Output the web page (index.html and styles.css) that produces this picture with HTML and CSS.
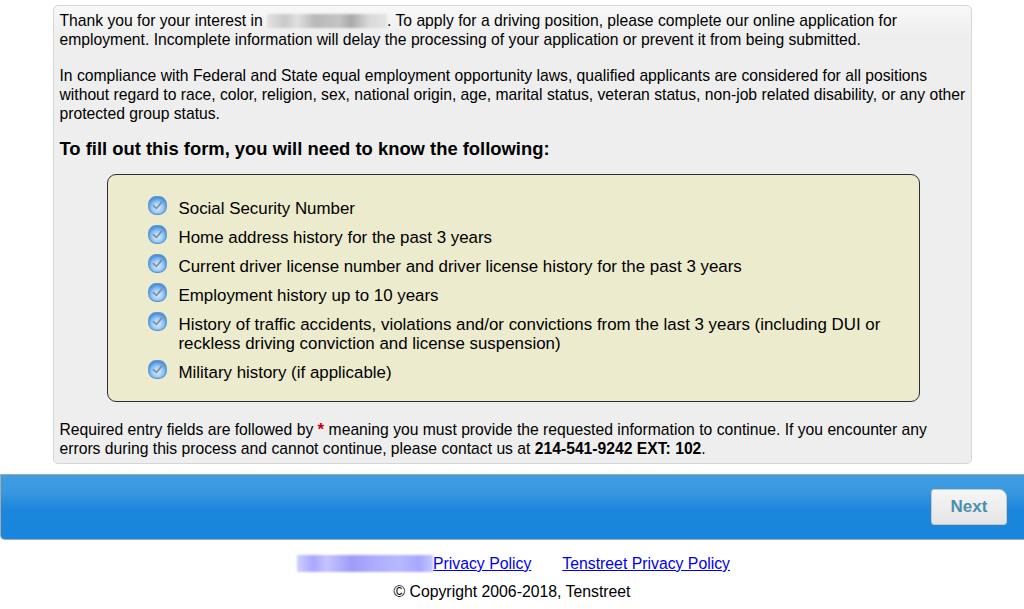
FILE: index.html
```html
<!DOCTYPE html>
<html>
<head>
<meta charset="utf-8">
<link rel="stylesheet" href="styles.css">
</head>
<body>
<div class="panel">
  <p class="para">Thank you for your interest in <span class="blur"></span>. To apply for a driving position, please complete our online application for employment. Incomplete information will delay the processing of your application or prevent it from being submitted.</p>
  <p class="para last">In compliance with Federal and State equal employment opportunity laws, qualified applicants are considered for all positions without regard to race, color, religion, sex, national origin, age, marital status, veteran status, non-job related disability, or any other protected group status.</p>
  <h3 class="heading">To fill out this form, you will need to know the following:</h3>
  <div class="needbox">
    <ul class="list">
      <li class="item"><svg class="chk" viewBox="0 0 18 18"><use href="#cb"/></svg><span>Social Security Number</span></li>
      <li class="item"><svg class="chk" viewBox="0 0 18 18"><use href="#cb"/></svg><span>Home address history for the past 3 years</span></li>
      <li class="item"><svg class="chk" viewBox="0 0 18 18"><use href="#cb"/></svg><span>Current driver license number and driver license history for the past 3 years</span></li>
      <li class="item"><svg class="chk" viewBox="0 0 18 18"><use href="#cb"/></svg><span>Employment history up to 10 years</span></li>
      <li class="item"><svg class="chk" viewBox="0 0 18 18"><use href="#cb"/></svg><span>History of traffic accidents, violations and/or convictions from the last 3 years (including DUI or reckless driving conviction and license suspension)</span></li>
      <li class="item"><svg class="chk" viewBox="0 0 18 18"><use href="#cb"/></svg><span>Military history (if applicable)</span></li>
    </ul>
  </div>
  <p class="para req">Required entry fields are followed by <span class="star">*</span> meaning you must provide the requested information to continue. If you encounter any errors during this process and cannot continue, please contact us at <b>214-541-9242 EXT: 102</b>.</p>
</div>
<div class="bar">
  <button class="next">Next</button>
</div>
<div class="footer">
  <div class="links"><span class="blur2"></span><a href="#">Privacy Policy</a><a href="#" class="ts">Tenstreet Privacy Policy</a></div>
  <div class="copy">© Copyright 2006-2018, Tenstreet</div>
</div>
<svg width="0" height="0" class="defs">
  <defs>
    <radialGradient id="cbg" cx="50%" cy="62%" r="60%">
      <stop offset="0" stop-color="#e4f2fe"/>
      <stop offset="0.5" stop-color="#9ccbf4"/>
      <stop offset="1" stop-color="#3f88d8"/>
    </radialGradient>
    <symbol id="cb" viewBox="0 0 18 18">
      <rect x="0.6" y="0.6" width="16.8" height="16.8" rx="7" fill="url(#cbg)" stroke="#5b97d4" stroke-width="1"/>
      <path d="M5.2 9.2 L8 11.8 L13 5.8" fill="none" stroke="#7d8fa3" stroke-width="1.7" stroke-linecap="round" stroke-linejoin="round"/>
    </symbol>
  </defs>
</svg>
</body>
</html>
```
FILE: styles.css
```css
html, body {
  margin: 0;
  padding: 0;
  background: #ffffff;
}
body {
  font-family: "Liberation Sans", Arial, Helvetica, sans-serif;
  color: #000;
}
.defs {
  position: absolute;
  width: 0;
  height: 0;
}
.panel {
  width: 910px;
  margin: 5px auto 0;
  padding: 5px 1px 7px 6px;
  border: 1px solid #d6d6d6;
  border-radius: 5px;
  background: linear-gradient(#f8f8f8 0px, #eeeeee 30px, #eeeeee 100%);
  box-sizing: content-box;
  height: 445px;
}
.para {
  margin: 0 0 17px;
  font-size: 15.7px;
  line-height: 19px;
}
.para.last {
  margin-bottom: 15px;
}
.req {
  margin: 0;
  padding-right: 4px;
}
.blur {
  display: inline-block;
  width: 120px;
  height: 14px;
  vertical-align: -2px;
  background: linear-gradient(90deg, #e2e2e2 0, #c9c9c9 15%, #e0e0e0 25%, #b9b9b9 40%, #c4c4c4 60%, #aaaaaa 70%, #d8d8d8 85%, #e4e4e4 100%);
  filter: blur(1px);
}
.heading {
  margin: 0 0 14px;
  font-size: 18.4px;
  line-height: 22px;
  font-weight: bold;
}
.needbox {
  margin: 0 50px 18px 47px;
  border: 1.5px solid #2e2e2e;
  border-radius: 9px;
  background: #ecebcd;
  padding: 24px 20px 19px 40px;
}
.list {
  list-style: none;
  margin: 0;
  padding: 0;
  display: flex;
  flex-direction: column;
  gap: 10px;
}
.item {
  display: flex;
  align-items: flex-start;
  gap: 12px;
  font-size: 16.9px;
  line-height: 19px;
}
.chk {
  width: 19px;
  height: 19px;
  flex: none;
  margin-top: -3px;
}
.star {
  color: #cc0000;
  font-weight: bold;
  font-size: 17px;
}
.bar {
  margin-top: 10px;
  height: 64px;
  border: 1px solid #a9a9a9;
  border-right: none;
  border-radius: 0 0 0 5px;
  background: linear-gradient(#3f9de2 0%, #3a98e0 25%, #1b86dc 55%, #1886dc 100%);
  display: flex;
  align-items: center;
  justify-content: flex-end;
  padding-right: 17px;
}
.next {
  width: 76px;
  height: 36px;
  border: 1px solid #c8c8c8;
  border-radius: 3px 8px 3px 3px;
  background: linear-gradient(#f6f6f6, #e4e4e4);
  color: #4a8fab;
  font-family: "Liberation Sans", Arial, sans-serif;
  font-weight: bold;
  font-size: 17px;
  padding: 0;
  margin-top: 0;
}
.footer {
  display: flex;
  flex-direction: column;
  align-items: center;
  font-size: 15.8px;
  line-height: 19px;
  padding-top: 14px;
}
.links {
  display: flex;
  align-items: center;
  padding-left: 3px;
}
.links a {
  color: #0000ee;
  text-decoration: underline;
}
.links .ts {
  margin-left: 31px;
}
.blur2 {
  display: inline-block;
  width: 136px;
  height: 17px;
  background: linear-gradient(90deg, #cfcfff 0, #a9a8ff 12%, #c5c4fe 22%, #9e9cf9 40%, #aeadfd 58%, #b8b8ff 75%, #a7a7ff 90%, #c6c6ff 100%);
  filter: blur(1.2px);
}
.copy {
  margin-top: 9px;
}
```
